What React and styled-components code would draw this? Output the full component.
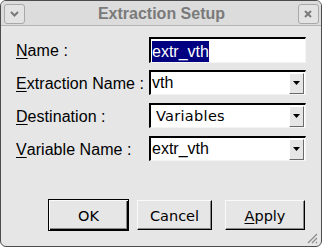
import React from "react";
import styled, { createGlobalStyle } from "styled-components";

const Global = createGlobalStyle`
  html, body { margin: 0; padding: 0; background: #ffffff; }
  body { font-family: "Liberation Sans", Arial, sans-serif; }
  * { box-sizing: border-box; }
`;

const Window = styled.div`
  position: relative;
  width: 322px;
  height: 247px;
  border: 1px solid #4c4c4c;
  border-radius: 6px;
  background: #e6e6e6;
  display: flex;
  flex-direction: column;
  overflow: hidden;
`;

const TitleBar = styled.div`
  height: 25px;
  flex: none;
  display: flex;
  align-items: center;
  justify-content: space-between;
  padding: 0 2px 0 3px;
  background: #dcdcdc;
  border-bottom: 1px solid #b4b4b4;
`;

const TitleButton = styled.div`
  width: 21px;
  height: 20px;
  margin-top: 1px;
  border: 1px solid #a9a9a9;
  border-radius: 3px;
  background: #e3e3e3;
  display: flex;
  align-items: center;
  justify-content: center;
`;

const Title = styled.div`
  font-family: "Liberation Sans", Arial, sans-serif;
  font-weight: bold;
  font-size: 16px;
  color: #7a7a7a;
  padding-top: 1px;
`;

const Body = styled.div`
  flex: 1;
  display: flex;
  flex-direction: column;
  padding: 11px 16px 15px 15px;
`;

const Form = styled.div`
  display: grid;
  grid-template-columns: 133px 157px;
  grid-auto-rows: 25px;
  row-gap: 8px;
`;

const Label = styled.div`
  font-size: 16px;
  letter-spacing: 0.05px;
  color: #000;
  display: flex;
  align-items: center;
  padding-top: 3px;
  white-space: nowrap;
  u { text-decoration: underline; text-underline-offset: 2px; }
`;

const Sunken = styled.div`
  position: relative;
  display: flex;
  align-items: center;
  background: #ffffff;
  border-style: solid;
  border-width: 2px 1px 1px 2px;
  border-color: #000 #f4f4f4 #f4f4f4 #000;
  font-size: 16px;
  color: #000;
`;

const TextField = styled(Sunken)`
  height: 26px;
  padding-left: 1px;
  padding-top: 2px;
`;

const Selected = styled.span`
  background: #000080;
  color: #ffffff;
  line-height: 21px;
`;

const Combo = styled(Sunken)`
  justify-content: space-between;
  padding-left: ${(p) => p.$indent || 1}px;
  font-family: ${(p) =>
    p.$alt ? '"DejaVu Sans", sans-serif' : '"Liberation Sans", Arial, sans-serif'};
  font-size: ${(p) => (p.$alt ? 14.5 : 16)}px;
  letter-spacing: ${(p) => (p.$alt ? "0.3px" : "0")};
`;

const ArrowButton = styled.div`
  width: 15px;
  height: 21px;
  margin-right: 1px;
  background: #e6e6e6;
  border-style: solid;
  border-width: 1px;
  border-color: #ffffff #6a6a6a #6a6a6a #ffffff;
  display: flex;
  align-items: center;
  justify-content: center;
`;

const Buttons = styled.div`
  margin-top: auto;
  display: flex;
  align-items: center;
  justify-content: flex-end;
`;

const Button = styled.div`
  height: ${(p) => (p.$default ? 32 : 30)}px;
  width: ${(p) => p.$w}px;
  margin-left: ${(p) => p.$gap || 0}px;
  display: flex;
  align-items: center;
  justify-content: center;
  font-family: "DejaVu Sans", sans-serif;
  font-size: 14.5px;
  color: #000;
  background: #e6e6e6;
  border: 1px solid;
  border-color: ${(p) => (p.$default ? "#000" : "#fafafa #000 #000 #fafafa")};
  box-shadow: ${(p) =>
    p.$default
      ? "inset 1px 1px 0 #fafafa, inset -1px -1px 0 #000, inset -2px -2px 0 #8a8a8a"
      : "inset -1px -1px 0 #8a8a8a"};
  padding-top: 1px;
  u { text-decoration: underline; text-underline-offset: 2px; }
`;

const Grip = styled.svg`
  position: absolute;
  right: 3px;
  bottom: 2px;
`;

const Arrow = () => (
  <svg width="7" height="4" viewBox="0 0 7 4">
    <path d="M0 0 H7 L3.5 4 Z" fill="#000" />
  </svg>
);

const fields = [
  { label: "Name :", key: "N", rest: "ame :", type: "text", value: "extr_vth" },
  { label: "Extraction Name :", key: "E", rest: "xtraction Name :", type: "combo", value: "vth" },
  { label: "Destination :", key: "D", rest: "estination :", type: "combo", value: "Variables", alt: true },
  { label: "Variable Name :", key: "V", rest: "ariable Name :", type: "combo", value: "extr_vth" },
];

export default function App() {
  return (
    <>
      <Global />
      <Window>
        <TitleBar>
          <TitleButton>
            <svg width="9" height="6" viewBox="0 0 9 6">
              <path d="M1 1 L4.5 4.5 L8 1" fill="none" stroke="#7a7a7a" strokeWidth="2" />
            </svg>
          </TitleButton>
          <Title>Extraction Setup</Title>
          <TitleButton>
            <svg width="8" height="8" viewBox="0 0 8 8">
              <path d="M1 1 L7 7 M7 1 L1 7" stroke="#7a7a7a" strokeWidth="2" />
            </svg>
          </TitleButton>
        </TitleBar>
        <Body>
          <Form>
            {fields.map((f) => (
              <React.Fragment key={f.label}>
                <Label>
                  <u>{f.key}</u>
                  {f.rest}
                </Label>
                {f.type === "text" ? (
                  <TextField>
                    <Selected>{f.value}</Selected>
                  </TextField>
                ) : (
                  <Combo $alt={f.alt} $indent={f.alt ? 5 : 1}>
                    <span>{f.value}</span>
                    <ArrowButton>
                      <Arrow />
                    </ArrowButton>
                  </Combo>
                )}
              </React.Fragment>
            ))}
          </Form>
          <Buttons>
            <Button $default $w={81}>OK</Button>
            <Button $w={75} $gap={8}>Cancel</Button>
            <Button $w={80} $gap={13}>
              <span>
                <u>A</u>pply
              </span>
            </Button>
          </Buttons>
        </Body>
        <Grip width="12" height="12" viewBox="0 0 12 12">
          <path d="M11 2 L2 11 M11 6 L6 11 M11 10 L10 11" stroke="#8a8a8a" strokeWidth="1.2" />
        </Grip>
      </Window>
    </>
  );
}
